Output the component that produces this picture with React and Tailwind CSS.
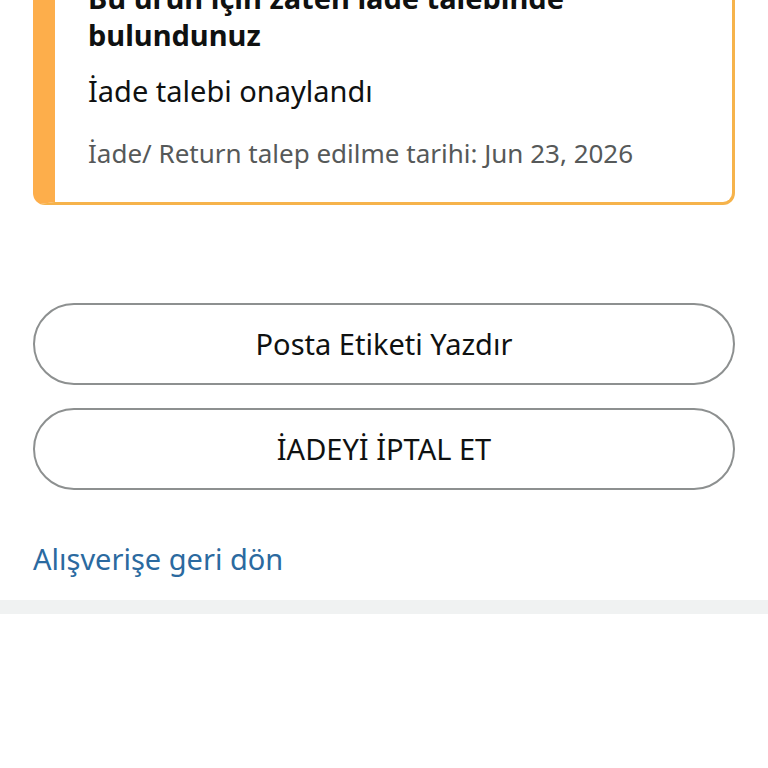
import React from 'react'

export default function App() {
  return (
    <div className="min-h-screen bg-white overflow-hidden" style={{ fontFamily: '"Noto Sans", "Open Sans", sans-serif' }}>
      <div className="px-[33px]">
        <div className="-mt-[34px] rounded-[12px] border-[3px] border-l-[22px] border-[#f6b34b] border-l-[#fdae4b] bg-white pl-[33px] pr-6 pt-[10px] pb-[31px]">
          <h2 className="text-[29px] font-bold leading-[37px] text-[#0f1111]">
            Bu ürün için zaten iade talebinde<br />bulundunuz
          </h2>
          <p className="mt-[18px] text-[29px] leading-[40px] text-[#0f1111]">İade talebi onaylandı</p>
          <p className="mt-[24px] text-[26px] leading-[36px] text-[#565959]">
            İade/ Return talep edilme tarihi: Jun 23, 2026
          </p>
        </div>

        <div className="mt-[98px] flex flex-col gap-[23px]">
          <button className="h-[82px] w-full rounded-full border-2 border-[#8d9090] bg-white text-[29px] text-[#0f1111]">
            Posta Etiketi Yazdır
          </button>
          <button className="h-[82px] w-full rounded-full border-2 border-[#8d9090] bg-white text-[29px] text-[#0f1111]">
            İADEYİ İPTAL ET
          </button>
        </div>

        <div className="pt-[49px] pb-[21px]">
          <a href="#" className="block text-[29px] leading-[40px] text-[#2b6aa0]">Alışverişe geri dön</a>
        </div>
      </div>
      <div className="h-[14px] bg-[#f0f2f2]" />
    </div>
  )
}
